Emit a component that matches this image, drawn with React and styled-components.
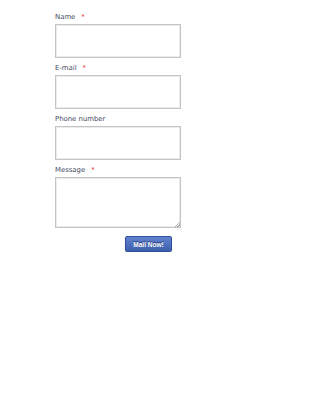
import React from "react";
import styled, { createGlobalStyle } from "styled-components";

const Global = createGlobalStyle`
  html, body { margin: 0; padding: 0; background: #fff; }
  body { font-family: "DejaVu Sans", Verdana, sans-serif; }
`;

const Form = styled.form`
  width: 126px;
  padding: 12px 0 0 55px;
  display: flex;
  flex-direction: column;
`;

const Field = styled.div`
  display: flex;
  flex-direction: column;
  margin-bottom: 5px;
`;

const Label = styled.label`
  font-family: "DejaVu Sans", Verdana, sans-serif;
  font-size: 6.9px;
  color: #464b62;
  height: 12px;
  line-height: 11px;
  display: flex;
  gap: 6px;
`;

const Star = styled.span`
  color: #e03030;
`;

const Input = styled.input`
  box-sizing: border-box;
  width: 126px;
  height: ${(p) => p.$h}px;
  border: 1px solid #c4c4c4;
  box-shadow: inset 0 0 0 1px #ececec;
  padding: 2px;
  margin: 0;
  font-size: 8px;
  background: #fff;
`;

const Area = styled.textarea`
  box-sizing: border-box;
  width: 126px;
  height: 51px;
  border: 1px solid #c4c4c4;
  box-shadow: inset 0 0 0 1px #ececec;
  padding: 2px;
  margin: 0;
  font-size: 8px;
  resize: vertical;
  background: #fff;
  display: block;

  &::-webkit-resizer {
    background:
      linear-gradient(135deg, transparent 50%, #aaa 50%, #aaa 62%, transparent 62%, transparent 74%, #aaa 74%, #aaa 86%, transparent 86%)
      right bottom / 6px 6px no-repeat;
  }
`;

const Row = styled.div`
  display: flex;
  justify-content: flex-start;
  padding-left: 70px;
  margin-top: 3px;
`;

const Button = styled.button`
  width: 47px;
  height: 16px;
  border: 1px solid #2f5096;
  border-radius: 2px;
  background: linear-gradient(#6283cf, #3c5fae);
  color: #fff;
  font-family: "Liberation Sans", Arial, sans-serif;
  font-weight: bold;
  font-size: 6.5px;
  padding: 0;
  text-shadow: 0 -1px 0 #1d3470;
  box-shadow: 0 1px 1px rgba(0,0,0,0.25);
`;

const fields = [
  { label: "Name", req: true },
  { label: "E-mail", req: true },
  { label: "Phone number", req: false },
];

export default function App() {
  return (
    <>
      <Global />
      <Form onSubmit={(e) => e.preventDefault()}>
        {fields.map((f) => (
          <Field key={f.label}>
            <Label>
              {f.label}
              {f.req && <Star>*</Star>}
            </Label>
            <Input $h={34} type="text" />
          </Field>
        ))}
        <Field>
          <Label>
            Message<Star>*</Star>
          </Label>
          <Area />
        </Field>
        <Row>
          <Button type="submit">Mail Now!</Button>
        </Row>
      </Form>
    </>
  );
}
